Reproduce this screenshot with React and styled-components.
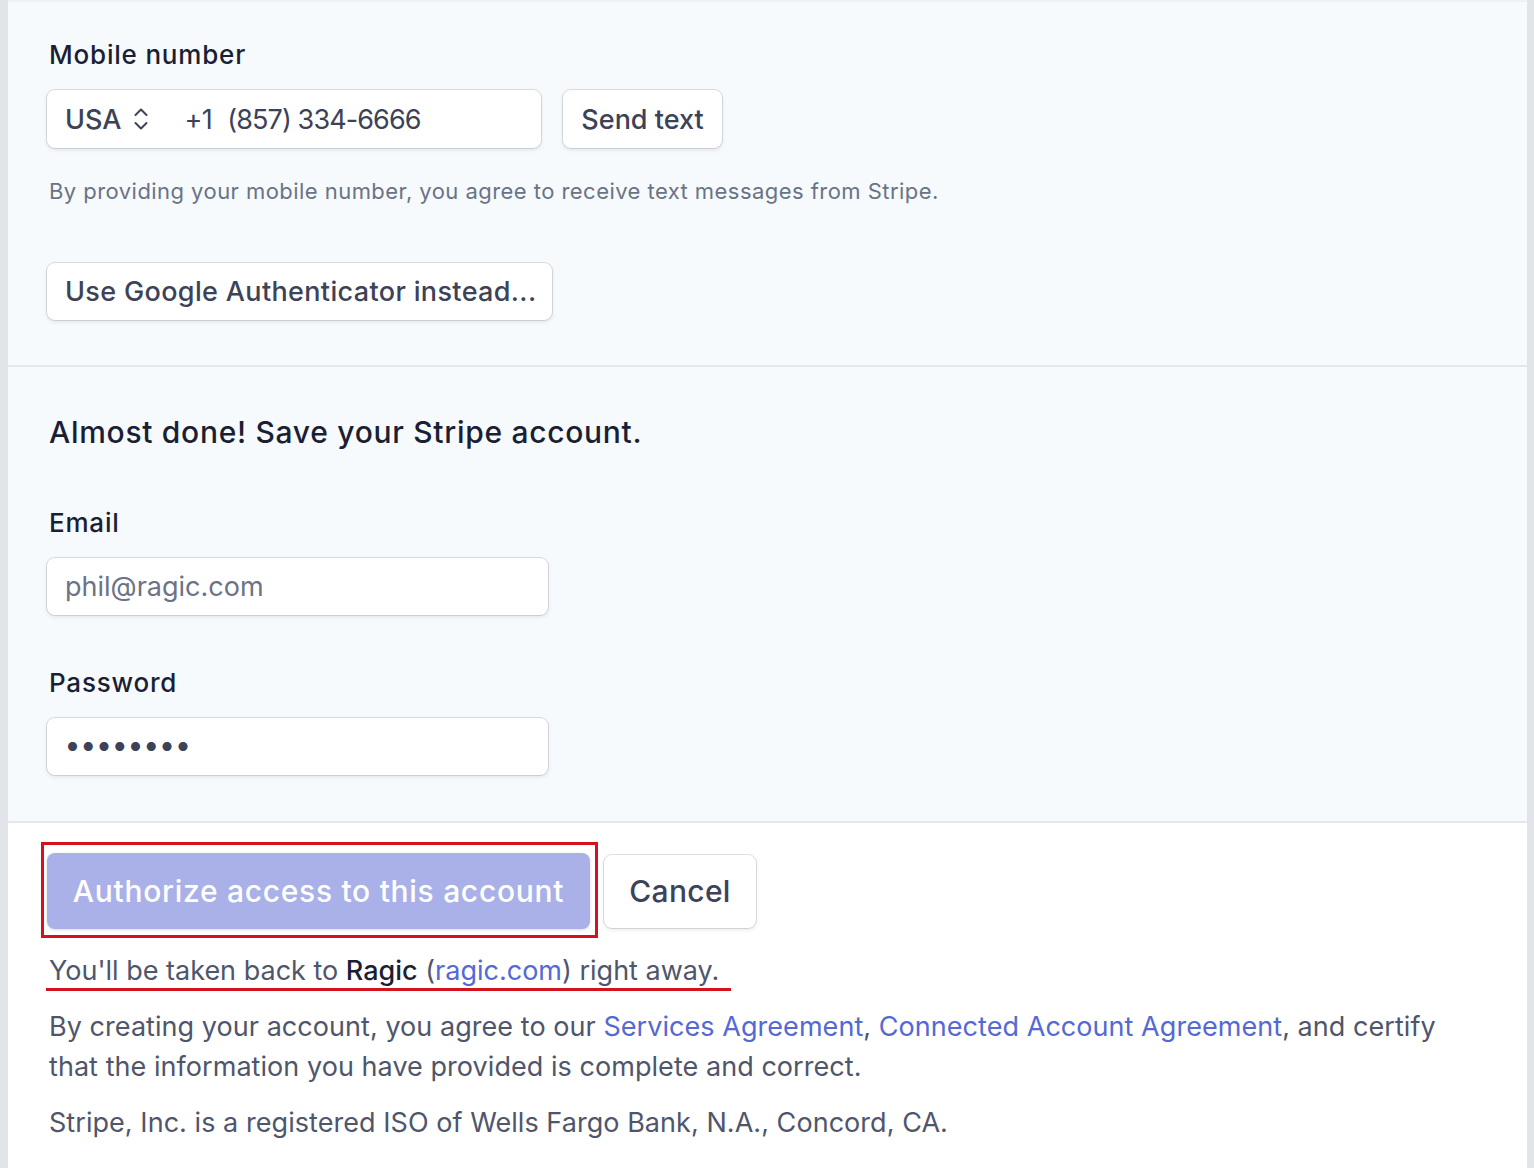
import React from 'react';
import styled, { createGlobalStyle } from 'styled-components';

const GlobalStyle = createGlobalStyle`
  html, body {
    margin: 0;
    padding: 0;
    background: #ffffff;
  }
  body {
    font-family: Inter, "Liberation Sans", Arial, sans-serif;
    -webkit-font-smoothing: antialiased;
  }
  * {
    box-sizing: border-box;
  }
`;

const Frame = styled.div`
  display: flex;
  min-height: 1168px;
  background: #ffffff;
`;

const Rail = styled.div`
  flex-shrink: 0;
  width: ${p => p.$width}px;
  background: #e1e5ea;
`;

const Panel = styled.main`
  flex: 1;
  display: flex;
  flex-direction: column;
  border-top: 2px solid #edf0f4;
`;

const Section = styled.section`
  display: flex;
  flex-direction: column;
  align-items: flex-start;
  background: ${p => (p.$tint ? '#f7fafc' : '#ffffff')};
  padding: ${p => p.$pad};
  border-bottom: ${p => (p.$divider ? '2px solid #e4e8ee' : 'none')};
`;

const Label = styled.div`
  font-size: 26px;
  font-weight: 500;
  line-height: 32px;
  letter-spacing: 0.8px;
  color: #1a1f36;
  margin: ${p => p.$margin || '0 0 19px 2px'};
`;

const Heading = styled.h2`
  margin: 0 0 57px 2px;
  font-size: 30px;
  font-weight: 500;
  line-height: 36px;
  letter-spacing: 0.7px;
  color: #1a1f36;
`;

const boxShadow = '0 0 0 1px rgba(60, 66, 87, 0.16), 0 2px 4px 0 rgba(60, 66, 87, 0.12)';

const PhoneRow = styled.div`
  display: flex;
  gap: 22px;
`;

const InputBox = styled.div`
  display: flex;
  align-items: center;
  width: ${p => p.$width}px;
  height: ${p => p.$height || 58}px;
  padding: 0 18px;
  background: #ffffff;
  border-radius: 8px;
  box-shadow: ${boxShadow};
  font-size: 27px;
  color: ${p => (p.$muted ? '#6b7385' : '#3c4257')};
`;

const Country = styled.span`
  display: flex;
  align-items: center;
  gap: 12px;
  color: #3c4257;
  font-weight: 500;
`;

const DialCode = styled.span`
  margin-left: 35px;
  letter-spacing: -0.5px;
`;

const PhoneNumber = styled.span`
  margin-left: 15px;
  letter-spacing: -0.9px;
`;

const Dots = styled.span`
  font-size: 12px;
  letter-spacing: 4.8px;
  color: #3c4257;
  margin-left: 2px;
`;

const Button = styled.button`
  display: flex;
  align-items: center;
  justify-content: ${p => (p.$left ? 'flex-start' : 'center')};
  width: ${p => p.$width}px;
  height: ${p => p.$height}px;
  padding: 0 18px;
  margin: ${p => p.$margin || '0'};
  border: none;
  border-radius: 8px;
  background: #ffffff;
  box-shadow: ${boxShadow};
  font-family: inherit;
  font-size: ${p => p.$size || 27}px;
  font-weight: 500;
  letter-spacing: ${p => p.$spacing || 0}px;
  text-align: ${p => (p.$left ? 'left' : 'center')};
  white-space: nowrap;
  color: #3c4257;
  cursor: pointer;
`;

const PrimaryButton = styled(Button)`
  background: #a9b1e8;
  color: #ffffff;
  box-shadow: 0 1px 3px rgba(50, 50, 93, 0.18);
`;

const Helper = styled.p`
  margin: 29px 0 0 2px;
  font-size: 22px;
  line-height: 28px;
  letter-spacing: 0.45px;
  color: #697386;
`;

const ActionRow = styled.div`
  display: flex;
  align-items: center;
  gap: 14px;
`;

const Highlighted = styled.div`
  position: relative;
`;

const HighlightBox = styled.span`
  position: absolute;
  top: -11px;
  left: -6px;
  right: -8px;
  bottom: -9px;
  border: 3px solid #d5121c;
  pointer-events: none;
`;

const ReturnNote = styled.p`
  position: relative;
  margin: 25px 0 0 2px;
  font-size: 27px;
  line-height: 34px;
  color: #4f566b;

  &::after {
    content: '';
    position: absolute;
    left: -3px;
    right: -12px;
    bottom: -3px;
    height: 3px;
    background: #d5121c;
  }
`;

const Strong = styled.span`
  color: #1a1f36;
  font-weight: 500;
`;

const Link = styled.a`
  color: #5469d4;
  text-decoration: none;
`;

const Legal = styled.p`
  margin: ${p => p.$margin};
  margin-left: 2px;
  font-size: 27px;
  line-height: 40px;
  letter-spacing: 0.05px;
  color: #4f566b;
`;

const UpDown = () => (
  <svg width="16" height="26" viewBox="0 0 16 26" fill="none" stroke="#3c4257" strokeWidth="2" strokeLinecap="round" strokeLinejoin="round">
    <path d="M2.5 9 L8 3.5 L13.5 9" />
    <path d="M2.5 17 L8 22.5 L13.5 17" />
  </svg>
);

export default function App() {
  return (
    <>
      <GlobalStyle />
      <Frame>
        <Rail $width={8} />
        <Panel>
          <Section $tint $divider $pad="37px 39px 45px">
            <Label>Mobile number</Label>
            <PhoneRow>
              <InputBox $width={494}>
                <Country>
                  USA
                  <UpDown />
                </Country>
                <DialCode>+1</DialCode>
                <PhoneNumber>(857) 334-6666</PhoneNumber>
              </InputBox>
              <Button $width={159} $height={58}>Send text</Button>
            </PhoneRow>
            <Helper>By providing your mobile number, you agree to receive text messages from Stripe.</Helper>
            <Button $left $width={505} $height={57} $margin="58px 0 0" $spacing={0.35}>
              Use Google Authenticator instead...
            </Button>
          </Section>

          <Section $tint $divider $pad="47px 39px 46px">
            <Heading>Almost done! Save your Stripe account.</Heading>
            <Label>Email</Label>
            <InputBox $width={501} $height={57} $muted>phil@ragic.com</InputBox>
            <Label $margin="52px 0 19px 2px">Password</Label>
            <InputBox $width={501} $height={57}>
              <Dots>●●●●●●●●</Dots>
            </InputBox>
          </Section>

          <Section $pad="30px 39px 30px">
            <ActionRow>
              <Highlighted>
                <PrimaryButton $width={543} $height={76} $size={30} $spacing={0.7}>
                  Authorize access to this account
                </PrimaryButton>
                <HighlightBox />
              </Highlighted>
              <Button $width={152} $height={73} $size={30} $spacing={0.3}>Cancel</Button>
            </ActionRow>
            <ReturnNote>
              You'll be taken back to <Strong>Ragic</Strong> (<Link href="#">ragic.com</Link>) right away.
            </ReturnNote>
            <Legal $margin="19px 0 0">
              By creating your account, you agree to our <Link href="#">Services Agreement</Link>,{' '}
              <Link href="#">Connected Account Agreement</Link>, and certify
              <br />
              that the information you have provided is complete and correct.
            </Legal>
            <Legal $margin="16px 0 0">Stripe, Inc. is a registered ISO of Wells Fargo Bank, N.A., Concord, CA.</Legal>
          </Section>
        </Panel>
        <Rail $width={7} />
      </Frame>
    </>
  );
}
